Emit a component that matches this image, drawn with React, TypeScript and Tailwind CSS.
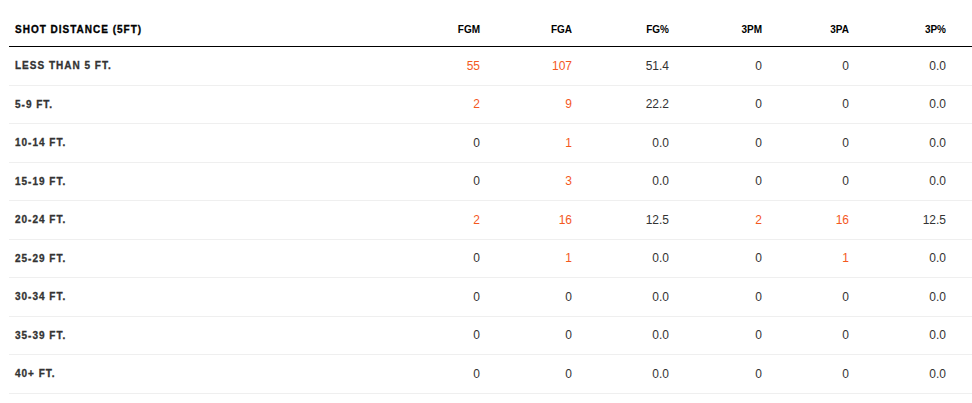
import React from "react";

type Cell = { v: string; o?: boolean };
const O = (v: string): Cell => ({ v, o: true });
const N = (v: string): Cell => ({ v });

const rows: { label: string; cells: Cell[] }[] = [
  { label: "LESS THAN 5 FT.", cells: [O("55"), O("107"), N("51.4"), N("0"), N("0"), N("0.0")] },
  { label: "5-9 FT.", cells: [O("2"), O("9"), N("22.2"), N("0"), N("0"), N("0.0")] },
  { label: "10-14 FT.", cells: [N("0"), O("1"), N("0.0"), N("0"), N("0"), N("0.0")] },
  { label: "15-19 FT.", cells: [N("0"), O("3"), N("0.0"), N("0"), N("0"), N("0.0")] },
  { label: "20-24 FT.", cells: [O("2"), O("16"), N("12.5"), O("2"), O("16"), N("12.5")] },
  { label: "25-29 FT.", cells: [N("0"), O("1"), N("0.0"), N("0"), O("1"), N("0.0")] },
  { label: "30-34 FT.", cells: [N("0"), N("0"), N("0.0"), N("0"), N("0"), N("0.0")] },
  { label: "35-39 FT.", cells: [N("0"), N("0"), N("0.0"), N("0"), N("0"), N("0.0")] },
  { label: "40+ FT.", cells: [N("0"), N("0"), N("0.0"), N("0"), N("0"), N("0.0")] },
];

const heads = ["FGM", "FGA", "FG%", "3PM", "3PA", "3P%"];
const grid = "grid grid-cols-[405px_92px_92px_97px_93px_87px_97px]";

export default function App() {
  return (
    <div className="bg-white w-[972px] h-[403px] overflow-hidden pl-[9px] pt-[12px] font-['Liberation_Sans',Arial,sans-serif]">
      <div className={`${grid} h-[35px] border-b border-black items-center box-border`}>
        <div className="pl-[6px] text-[10px] font-bold tracking-[1px] text-black [-webkit-text-stroke:0.3px_black]">
          SHOT DISTANCE (5FT)
        </div>
        {heads.map((h) => (
          <div key={h} className="text-right pr-[26px] text-[10px] font-bold text-black">
            {h}
          </div>
        ))}
      </div>
      {rows.map((r) => (
        <div key={r.label} className={`${grid} h-[38.5px] border-b border-[#efefef] items-center box-border`}>
          <div className="pl-[6px] text-[10px] font-bold tracking-[1px] text-[#333] [-webkit-text-stroke:0.3px_#333]">
            {r.label}
          </div>
          {r.cells.map((c, i) => (
            <div
              key={i}
              className={`text-right pr-[26px] text-[12px] ${c.o ? "text-[#f4581e]" : "text-[#333]"}`}
            >
              {c.v}
            </div>
          ))}
        </div>
      ))}
    </div>
  );
}
